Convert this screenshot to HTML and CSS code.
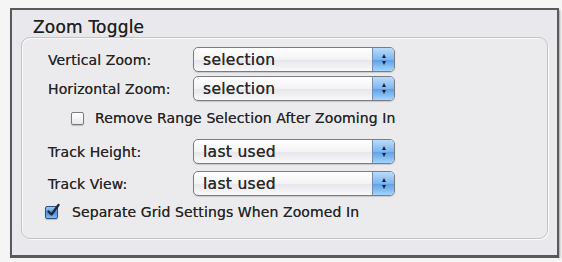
FILE: index.html
```html
<!DOCTYPE html>
<html>
<head>
<meta charset="utf-8">
<link rel="stylesheet" href="styles.css">
</head>
<body>
<div class="window">
  <div class="title">Zoom Toggle</div>
  <div class="group">
    <div class="row">
      <span class="label">Vertical Zoom:</span>
      <div class="popup"><span class="value">selection</span><span class="stepper"><i class="up"></i><i class="down"></i></span></div>
    </div>
    <div class="row">
      <span class="label">Horizontal Zoom:</span>
      <div class="popup"><span class="value">selection</span><span class="stepper"><i class="up"></i><i class="down"></i></span></div>
    </div>
    <label class="check indent">
      <span class="box"></span>
      <span>Remove Range Selection After Zooming In</span>
    </label>
    <div class="row spaced">
      <span class="label">Track Height:</span>
      <div class="popup"><span class="value">last used</span><span class="stepper"><i class="up"></i><i class="down"></i></span></div>
    </div>
    <div class="row wide">
      <span class="label">Track View:</span>
      <div class="popup"><span class="value">last used</span><span class="stepper"><i class="up"></i><i class="down"></i></span></div>
    </div>
    <label class="check last">
      <span class="box checked">
        <svg width="16" height="16" viewBox="0 0 16 16"><path d="M3.5 8.5 L6.5 11.5 L13.5 2" fill="none" stroke="#1a2a44" stroke-width="2.4" stroke-linecap="round" stroke-linejoin="round"/></svg>
      </span>
      <span>Separate Grid Settings When Zoomed In</span>
    </label>
  </div>
</div>
</body>
</html>
```

FILE: styles.css
```css
* { box-sizing: border-box; }
html, body { margin: 0; padding: 0; }
body {
  background: #f5f5f6;
  font-family: "DejaVu Sans", "Liberation Sans", sans-serif;
  color: #262626;
}
.window {
  margin: 8px 0 0 10px;
  width: 549px;
  height: 250px;
  background: #e9e8ec;
  border: 2px solid #5a5a5c;
  border-bottom-width: 3px;
  box-shadow: 1px 2px 2px rgba(0,0,0,0.35);
  padding: 8px 9px 0 9px;
  display: flex;
  flex-direction: column;
}
.title {
  font-size: 17px;
  line-height: 19px;
  padding-left: 12px;
  height: 19px;
  color: #1e1e1e;
  letter-spacing: 0.2px;
  text-shadow: 0 0 0.5px #444;
}
.group {
  height: 202px;
  border: 1px solid #c2c1c6;
  border-radius: 9px;
  background: #ebebee;
  box-shadow: inset 1px 1px 0 #fafafa, 1px 1px 0 #fafafa;
  padding: 9px 0 0 26px;
  display: flex;
  flex-direction: column;
}
.row {
  display: flex;
  align-items: center;
  height: 25px;
  margin-bottom: 4px;
}
.row.spaced { margin-top: 12px; }
.row.wide { margin-top: 3px; }
.label {
  width: 145px;
  font-size: 14px;
  letter-spacing: 0.1px;
  color: #242424;
  text-shadow: 0 0 0.5px #555;
}
.popup {
  width: 202px;
  height: 25px;
  border: 1px solid #7c7c80;
  border-radius: 5px;
  background: linear-gradient(#ffffff, #f3f3f5 50%, #e6e6ea 51%, #f9f9fb);
  display: flex;
  align-items: center;
  overflow: hidden;
  box-shadow: 0 1px 1px rgba(0,0,0,0.15);
}
.value {
  flex: 1;
  font-size: 15.5px;
  letter-spacing: 0.3px;
  padding-left: 9px;
  color: #2a2a2a;
  text-shadow: 0 0 0.6px #333;
}
.stepper {
  width: 22px;
  height: 100%;
  border-left: 1px solid #6f8fb8;
  background: linear-gradient(#b9dcfb, #7fb6f0 50%, #5b9de8 51%, #a6d4fb);
  display: flex;
  flex-direction: column;
  align-items: center;
  justify-content: center;
  gap: 3px;
}
.stepper i {
  display: block;
  width: 0; height: 0;
  border-left: 2.5px solid transparent;
  border-right: 2.5px solid transparent;
}
.stepper .up { border-bottom: 4px solid #1b2433; }
.stepper .down { border-top: 4px solid #1b2433; }
.check {
  display: flex;
  align-items: center;
  gap: 11px;
  font-size: 14px;
  letter-spacing: 0.1px;
  color: #242424;
  text-shadow: 0 0 0.5px #555;
  height: 18px;
  margin-top: 4px;
}
.check.indent { padding-left: 23px; }
.check.last { margin-top: 3px; margin-left: -3px; gap: 14px; }
.box {
  position: relative;
  width: 13px;
  height: 13px;
  border: 1px solid #7a7a7e;
  border-radius: 2px;
  background: linear-gradient(#ffffff, #e8e8ec);
  box-shadow: 0 1px 1px rgba(0,0,0,0.2);
  flex: none;
}
.box.checked {
  border-color: #2f4f7a;
  background: linear-gradient(#9cc9f4, #4f8fd8 55%, #82bdf2);
}
.box svg {
  position: absolute;
  left: -1px;
  top: -4px;
}
```
